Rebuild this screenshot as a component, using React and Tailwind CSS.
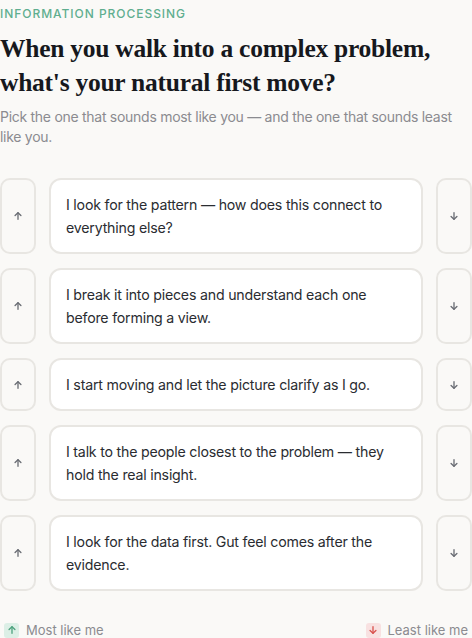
import React from "react";

const options = [
  "I look for the pattern — how does this connect to everything else?",
  "I break it into pieces and understand each one before forming a view.",
  "I start moving and let the picture clarify as I go.",
  "I talk to the people closest to the problem — they hold the real insight.",
  "I look for the data first. Gut feel comes after the evidence.",
];

function Arrow({ down, className }) {
  return (
    <svg viewBox="0 0 12 12" className={className} fill="none" stroke="currentColor" strokeWidth="1.6" strokeLinecap="round" strokeLinejoin="round">
      {down ? (
        <>
          <path d="M6 2v8" />
          <path d="M2.5 6.5L6 10l3.5-3.5" />
        </>
      ) : (
        <>
          <path d="M6 10V2" />
          <path d="M2.5 5.5L6 2l3.5 3.5" />
        </>
      )}
    </svg>
  );
}

export default function App() {
  return (
    <div className="min-h-[638px] w-[472px] bg-[#faf9f7] overflow-hidden" style={{ fontFamily: "Inter, 'Noto Sans', sans-serif" }}>
      <div className="pt-[7px] text-[12px] leading-[14px] tracking-[0.08em] font-medium text-[#5fae8f]">
        INFORMATION PROCESSING
      </div>
      <h1
        className="mt-[11px] text-[25.5px] leading-[34px] font-bold text-[#16181d] tracking-[-0.01em]"
        style={{ fontFamily: "'Liberation Serif', 'DejaVu Serif', serif" }}
      >
        When you walk into a complex problem, what's your natural first move?
      </h1>
      <p className="mt-[7px] text-[14px] leading-[20px] tracking-[-0.02em] text-[#8b8b90]">
        Pick the one that sounds most like you — and the one that sounds least like you.
      </p>
      <div className="mt-[31px] flex flex-col gap-[14px]">
        {options.map((t, i) => (
          <div key={i} className="flex gap-[13px] items-stretch">
            <button className="w-[36px] shrink-0 rounded-[10px] border-2 border-[#e8e6e2] bg-[#faf9f7] flex items-center justify-center text-[#6b6e75]">
              <Arrow className="w-[10px] h-[10px]" />
            </button>
            <div className="flex-1 rounded-[12px] border-2 border-[#e8e6e2] bg-white pl-[15px] pr-[12px] py-[13px] text-[14.2px] leading-[23px] tracking-[-0.015em] text-[#2a2c31]">
              {t}
            </div>
            <button className="w-[36px] shrink-0 rounded-[10px] border-2 border-[#e8e6e2] bg-[#faf9f7] flex items-center justify-center text-[#6b6e75]">
              <Arrow down className="w-[10px] h-[10px]" />
            </button>
          </div>
        ))}
      </div>
      <div className="mt-[31px] flex justify-between items-center text-[13px] leading-[16px] text-[#8b8b90]">
        <div className="flex items-center gap-[7px] pl-[4px]">
          <span className="w-[15px] h-[15px] rounded-[3px] bg-[#dcefe6] flex items-center justify-center text-[#4fa37f]">
            <Arrow className="w-[10px] h-[10px]" />
          </span>
          Most like me
        </div>
        <div className="flex items-center gap-[7px] pr-[4px]">
          <span className="w-[15px] h-[15px] rounded-[3px] bg-[#f8e1e1] flex items-center justify-center text-[#d9534f]">
            <Arrow down className="w-[10px] h-[10px]" />
          </span>
          Least like me
        </div>
      </div>
    </div>
  );
}
